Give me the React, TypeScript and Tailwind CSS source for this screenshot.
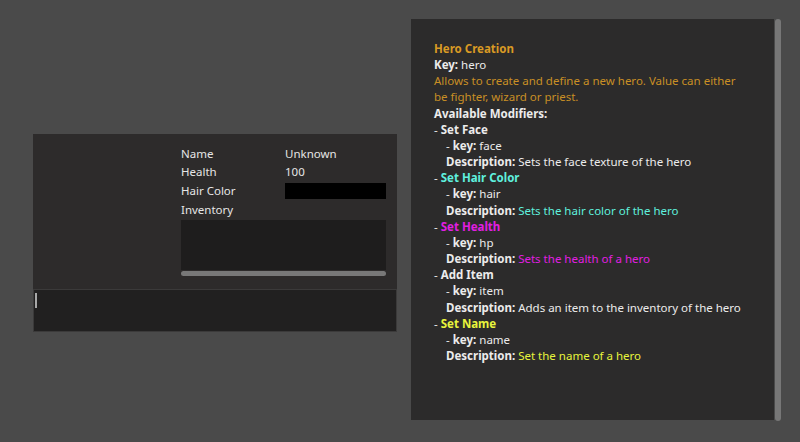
import React from "react";

const font = { fontFamily: '"Noto Sans", "Open Sans", sans-serif' };

const modifiers = [
  { name: "Set Face", key: "face", desc: "Sets the face texture of the hero", color: "" },
  { name: "Set Hair Color", key: "hair", desc: "Sets the hair color of the hero", color: "text-[#5ff0de]" },
  { name: "Set Health", key: "hp", desc: "Sets the health of a hero", color: "text-[#e21ee2]" },
  { name: "Add Item", key: "item", desc: "Adds an item to the inventory of the hero", color: "" },
  { name: "Set Name", key: "name", desc: "Set the name of a hero", color: "text-[#e8f43c]" },
];

function HeroSheet() {
  return (
    <div className="flex flex-col w-[364px] mt-[134px]">
      {/* stats */}
      <div className="h-[155px] bg-[#2d2b2b] pl-[148px] pr-[11px] pt-[10px] text-[11.5px] text-[#e6e6e6]">
        <div className="grid grid-cols-[104px_1fr] auto-rows-[18.7px] items-center">
          <span>Name</span>
          <span>Unknown</span>
          <span>Health</span>
          <span>100</span>
          <span>Hair Color</span>
          <div className="h-[16px] bg-black" />
          <span className="col-span-2">Inventory</span>
        </div>
        <div className="mt-[1px] h-[50px] bg-[#1e1d1d]" />
        <div className="mt-[1px] h-[5px] rounded-full bg-[#787878]" />
      </div>
      {/* command line */}
      <div className="h-[43px] bg-[#212020] border border-[#3b3a3a] pl-[1px] pt-[3px]">
        <div className="w-[2px] h-[15px] bg-[#a8a8a8]" />
      </div>
    </div>
  );
}

function HelpPanel() {
  return (
    <div className="flex mt-[19px]">
      <div className="w-[363px] h-[401px] bg-[#2c2b2b] pl-[23px] pt-[22px] text-[11.5px] leading-[16.15px] text-[#ececec] whitespace-nowrap">
        <div className="font-bold text-[#d99a24]">Hero Creation</div>
        <div>
          <b>Key:</b> hero
        </div>
        <div className="text-[#c98f25]">Allows to create and define a new hero. Value can either</div>
        <div className="text-[#c98f25]">be fighter, wizard or priest.</div>
        <div className="font-bold">Available Modifiers:</div>
        {modifiers.map((m) => (
          <div key={m.key}>
            <div>
              - <b className={m.color}>{m.name}</b>
            </div>
            <div className="pl-[12px]">
              - <b>key:</b> {m.key}
            </div>
            <div className="pl-[12px]">
              <b>Description:</b> <span className={m.color}>{m.desc}</span>
            </div>
          </div>
        ))}
      </div>
      <div className="ml-[1px] w-[6px] h-[402px] rounded-full bg-[#777777]" />
    </div>
  );
}

export default function App() {
  return (
    <div style={font} className="w-[800px] h-[442px] bg-[#4a4a4a] flex items-start pl-[33px] gap-[14px] overflow-hidden">
      <HeroSheet />
      <HelpPanel />
    </div>
  );
}
